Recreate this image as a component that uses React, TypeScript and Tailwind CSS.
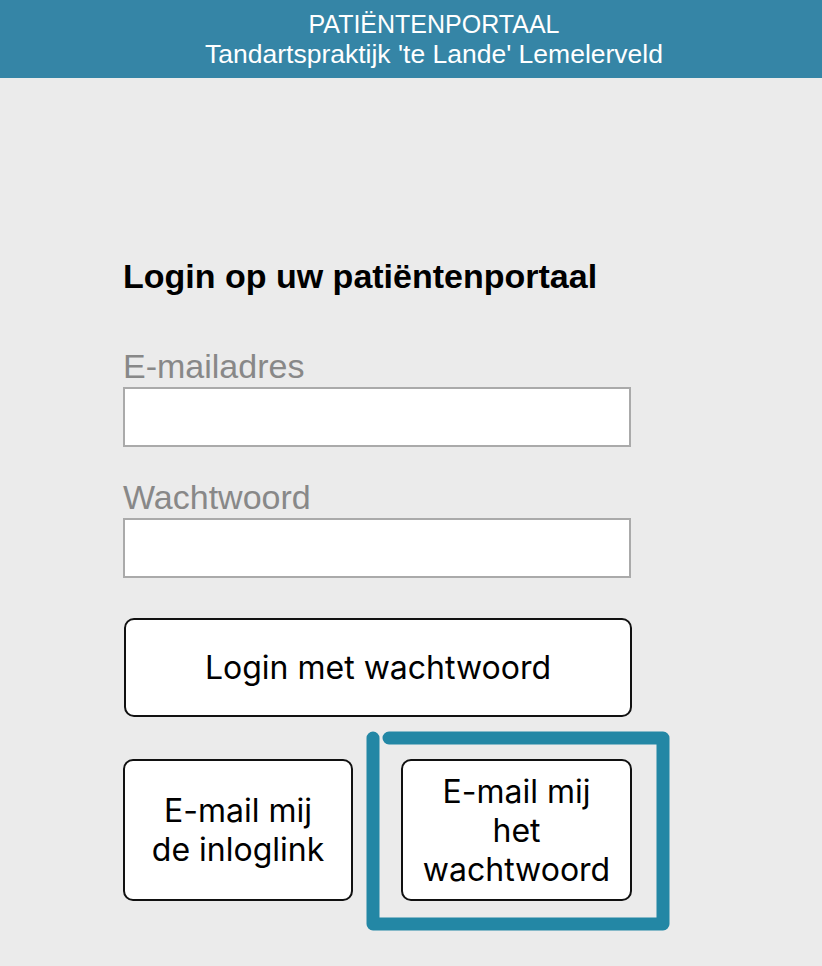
import React from 'react';

function Field({ label, className = '' }: { label: string; className?: string }) {
  return (
    <div className={`flex flex-col ${className}`}>
      <label className="text-[34px] leading-[39px] text-[#888888]">{label}</label>
      <input className="mt-[1px] h-[60px] w-[508px] border-2 border-[#aaaaaa] bg-white outline-none" />
    </div>
  );
}

export default function App() {
  return (
    <div className="min-h-[966px] bg-[#ebebeb] font-['Liberation_Sans',Arial,sans-serif]">
      {/* Header */}
      <div className="flex h-[78px] flex-col items-center justify-center bg-[#3585a6] pl-[46px] leading-[30px] text-white">
        <div className="text-[25px]">PATIËNTENPORTAAL</div>
        <div className="text-[26.5px]">Tandartspraktijk 'te Lande' Lemelerveld</div>
      </div>

      <div className="flex flex-col pl-[123px] pt-[178px]">
        <h1 className="text-[34px] font-bold leading-[40px] text-black">Login op uw patiëntenportaal</h1>

        <Field label="E-mailadres" className="mt-[51px]" />
        <Field label="Wachtwoord" className="mt-[31px]" />

        <div className="mt-[40px] flex w-[509px] flex-col font-['Inter',sans-serif] text-[32px] leading-[39px] text-black">
          <button className="ml-[1px] h-[99px] w-[508px] rounded-[10px] border-2 border-[#111111] bg-white">
            Login met wachtwoord
          </button>

          <div className="relative mt-[42px] flex justify-between">
            <button className="h-[142px] w-[230px] rounded-[10px] border-2 border-[#111111] bg-white px-1">
              E-mail mij<br />de inloglink
            </button>
            <button className="h-[142px] w-[231px] rounded-[10px] border-2 border-[#111111] bg-white px-1">
              E-mail mij<br />het<br />wachtwoord
            </button>

            {/* hand-drawn highlight */}
            <svg
              className="pointer-events-none absolute left-[243px] top-[-28px]"
              width="305"
              height="201"
              viewBox="0 0 305 201"
              fill="none"
            >
              <path
                d="M7 7 V193 H297 V7 H23"
                stroke="#2387a5"
                strokeWidth="13"
                strokeLinecap="round"
                strokeLinejoin="round"
              />
            </svg>
          </div>
        </div>
      </div>
    </div>
  );
}
